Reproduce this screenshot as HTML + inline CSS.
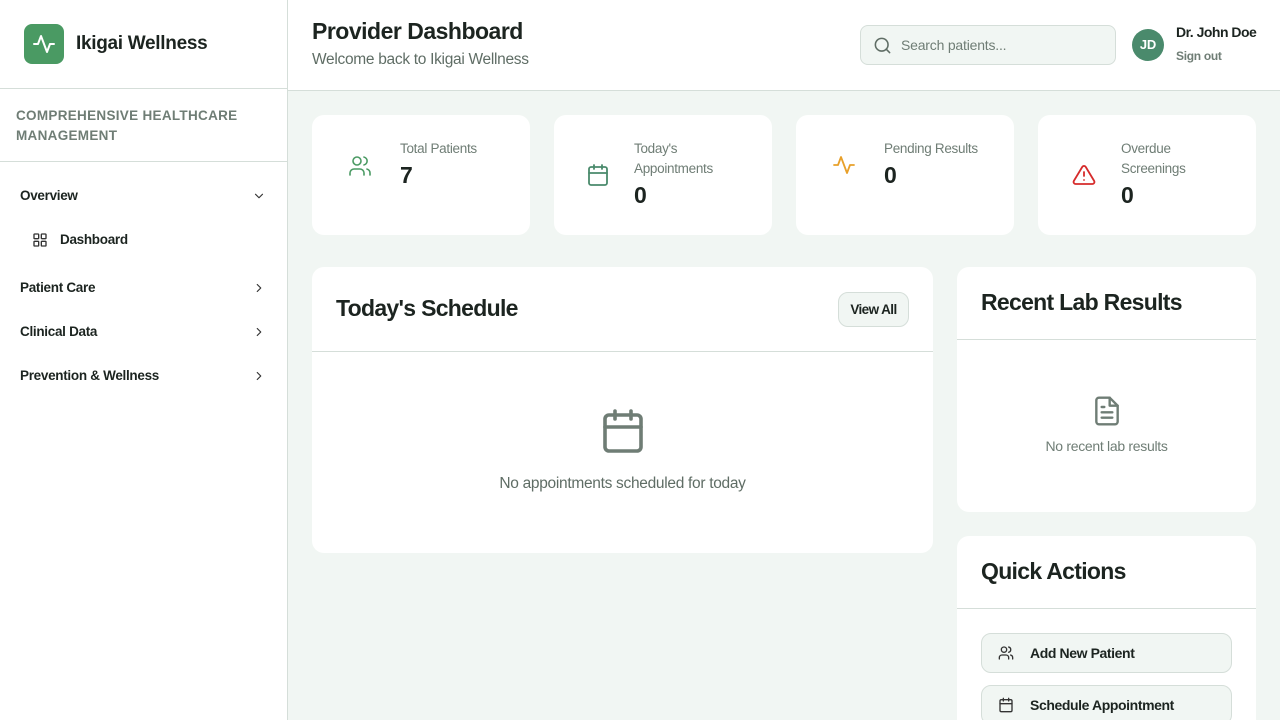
<!DOCTYPE html>
<html><head><meta charset="utf-8"><style>
*{box-sizing:border-box;margin:0;padding:0}
html,body{width:1280px;height:720px;overflow:hidden}
body{font-family:"Liberation Sans",sans-serif;background:#f1f6f3;position:relative;color:#1c2420;letter-spacing:-.2px}
.sb{position:absolute;left:0;top:0;width:288px;height:720px;background:#fff;border-right:1px solid #d5ded9}
.logo{position:absolute;left:24px;top:24px;width:40px;height:40px;border-radius:8px;background:#4a9a63}
.brand{position:absolute;left:76px;top:33px;font-size:19px;font-weight:bold;letter-spacing:-.3px}
.hr{position:absolute;left:0;width:287px;border-top:1px solid #d5ded9}
.tag{position:absolute;left:16px;top:106px;font-size:13.5px;font-weight:bold;color:#6f7d75;letter-spacing:.3px;line-height:20px;width:240px}
.nav{position:absolute;left:20px;font-size:13.5px;font-weight:bold;letter-spacing:-.3px}
.chev{position:absolute;left:252px}
.hd{position:absolute;left:288px;top:0;width:992px;height:91px;background:#fff;border-bottom:1px solid #d5ded9}
.card{position:absolute;background:#fff;border-radius:12px}
.lbl{position:absolute;font-size:13.5px;color:#6f7d75;line-height:20px;letter-spacing:-.3px}
.num{position:absolute;font-size:23px;font-weight:bold}
.h2{position:absolute;font-size:23px;font-weight:bold;letter-spacing:-.7px}
.line{position:absolute;left:0;right:0;border-top:1px solid #d5ded9}
.btn{position:absolute;left:24px;width:251px;height:40px;border:1px solid #d5ded9;border-radius:10px;background:#f1f6f3;font-size:14px;font-weight:bold;letter-spacing:-.4px}
svg{position:absolute;fill:none;stroke-linecap:round;stroke-linejoin:round}
</style></head><body>
<div class="sb">
<div class="logo"><svg style="left:8px;top:8px" width="24" height="24" viewBox="0 0 24 24" stroke="#fff" stroke-width="2"><path d="M22 12h-4l-3 8L9 4l-3 8H2"/></svg></div>
<div class="brand">Ikigai Wellness</div>
<div class="hr" style="top:88px"></div>
<div class="tag">COMPREHENSIVE HEALTHCARE<br>MANAGEMENT</div>
<div class="hr" style="top:161px"></div>
<div class="nav" style="top:188px">Overview</div>
<svg class="chev" style="top:189px" width="14" height="14" viewBox="0 0 24 24" stroke="#333" stroke-width="2"><path d="M6 9l6 6 6-6"/></svg>
<svg style="left:32px;top:232px" width="16" height="16" viewBox="0 0 24 24" stroke="#333" stroke-width="2"><rect x="3" y="3" width="7" height="7" rx="1"/><rect x="14" y="3" width="7" height="7" rx="1"/><rect x="14" y="14" width="7" height="7" rx="1"/><rect x="3" y="14" width="7" height="7" rx="1"/></svg>
<div class="nav" style="top:232px;left:60px">Dashboard</div>
<div class="nav" style="top:280px">Patient Care</div>
<div class="nav" style="top:324px">Clinical Data</div>
<div class="nav" style="top:368px">Prevention &amp; Wellness</div>
<svg class="chev" style="top:281px" width="14" height="14" viewBox="0 0 24 24" stroke="#333" stroke-width="2"><path d="M9 6l6 6-6 6"/></svg>
<svg class="chev" style="top:325px" width="14" height="14" viewBox="0 0 24 24" stroke="#333" stroke-width="2"><path d="M9 6l6 6-6 6"/></svg>
<svg class="chev" style="top:369px" width="14" height="14" viewBox="0 0 24 24" stroke="#333" stroke-width="2"><path d="M9 6l6 6-6 6"/></svg>
</div>
<div class="hd">
<div style="position:absolute;left:24px;top:18px;font-size:23px;font-weight:bold;letter-spacing:-.5px">Provider Dashboard</div>
<div style="position:absolute;left:24px;top:51px;font-size:15.5px;color:#5f6d65;letter-spacing:-.3px">Welcome back to Ikigai Wellness</div>
<div style="position:absolute;left:572px;top:25px;width:256px;height:40px;border:1px solid #d5ded9;border-radius:8px;background:#f1f6f3">
<svg style="left:12px;top:10px" width="19" height="19" viewBox="0 0 24 24" stroke="#5f6d65" stroke-width="2"><circle cx="11" cy="11" r="8"/><path d="M21 21l-4.3-4.3"/></svg>
<div style="position:absolute;left:40px;top:11px;font-size:14px;color:#6f7d75">Search patients...</div></div>
<div style="position:absolute;left:844px;top:29px;width:32px;height:32px;border-radius:50%;background:#4a8a6c;color:#fff;font-size:13px;font-weight:bold;text-align:center;line-height:32px">JD</div>
<div style="position:absolute;left:888px;top:24px;font-size:14px;font-weight:bold;letter-spacing:-.5px">Dr. John Doe</div>
<div style="position:absolute;left:888px;top:49px;font-size:12px;font-weight:bold;color:#6f7d75;letter-spacing:-.3px">Sign out</div>
</div>

<div class="card" style="left:312px;top:115px;width:218px;height:120px">
<svg style="left:36px;top:39px" width="24" height="24" viewBox="0 0 24 24" stroke="#4a9a63" stroke-width="1.6"><path d="M16 21v-2a4 4 0 0 0-4-4H6a4 4 0 0 0-4 4v2"/><circle cx="9" cy="7" r="4"/><path d="M22 21v-2a4 4 0 0 0-3-3.9M16 3.1a4 4 0 0 1 0 7.8"/></svg>
<div class="lbl" style="left:88px;top:24px">Total Patients</div><div class="num" style="left:88px;top:47px">7</div></div>
<div class="card" style="left:554px;top:115px;width:218px;height:120px">
<svg style="left:32px;top:48px" width="24" height="24" viewBox="0 0 24 24" stroke="#4a8a6c" stroke-width="1.8"><rect x="3" y="4" width="18" height="18" rx="2"/><path d="M16 2v4M8 2v4M3 10h18"/></svg>
<div class="lbl" style="left:80px;top:24px">Today's<br>Appointments</div><div class="num" style="left:80px;top:67px">0</div></div>
<div class="card" style="left:796px;top:115px;width:218px;height:120px">
<svg style="left:36px;top:38px" width="24" height="24" viewBox="0 0 24 24" stroke="#e8a02a" stroke-width="1.8"><path d="M22 12h-4l-3 8L9 4l-3 8H2"/></svg>
<div class="lbl" style="left:88px;top:24px">Pending Results</div><div class="num" style="left:88px;top:47px">0</div></div>
<div class="card" style="left:1038px;top:115px;width:218px;height:120px">
<svg style="left:34px;top:48px" width="24" height="24" viewBox="0 0 24 24" stroke="#d62b2b" stroke-width="1.8"><path d="M10.3 3.9L1.8 18a2 2 0 0 0 1.7 3h17a2 2 0 0 0 1.7-3L13.7 3.9a2 2 0 0 0-3.4 0zM12 9v4M12 17h.01"/></svg>
<div class="lbl" style="left:83px;top:24px">Overdue<br>Screenings</div><div class="num" style="left:83px;top:67px">0</div></div>

<div class="card" style="left:312px;top:267px;width:621px;height:286px">
<div class="h2" style="left:24px;top:28px">Today's Schedule</div>
<div style="position:absolute;left:526px;top:25px;width:71px;height:35px;border:1px solid #d5ded9;border-radius:10px;background:#f1f6f3;font-size:13.5px;font-weight:bold;text-align:center;line-height:33px;letter-spacing:-.6px">View All</div>
<div class="line" style="top:84px"></div>
<svg style="left:287px;top:140px" width="48" height="48" viewBox="0 0 24 24" stroke="#6f7d75" stroke-width="1.8"><rect x="3" y="4" width="18" height="18" rx="2"/><path d="M16 2v4M8 2v4M3 10h18"/></svg>
<div style="position:absolute;left:0;right:0;top:208px;text-align:center;font-size:15.5px;color:#5f6d65;letter-spacing:-.3px">No appointments scheduled for today</div>
</div>

<div class="card" style="left:957px;top:267px;width:299px;height:245px">
<div class="h2" style="left:24px;top:22px">Recent Lab Results</div>
<div class="line" style="top:72px"></div>
<svg style="left:134px;top:128px" width="32" height="32" viewBox="0 0 24 24" stroke="#6f7d75" stroke-width="1.8"><path d="M14 2H6a2 2 0 0 0-2 2v16a2 2 0 0 0 2 2h12a2 2 0 0 0 2-2V8z"/><path d="M14 2v6h6M16 13H8M16 17H8M10 9H8"/></svg>
<div style="position:absolute;left:0;right:0;top:171px;text-align:center;font-size:14px;color:#6f7d75;letter-spacing:-.3px">No recent lab results</div>
</div>

<div class="card" style="left:957px;top:536px;width:299px;height:200px">
<div class="h2" style="left:24px;top:22px">Quick Actions</div>
<div class="line" style="top:72px"></div>
<div class="btn" style="top:97px"><svg style="left:16px;top:11px" width="16" height="16" viewBox="0 0 24 24" stroke="#333" stroke-width="2"><path d="M16 21v-2a4 4 0 0 0-4-4H6a4 4 0 0 0-4 4v2"/><circle cx="9" cy="7" r="4"/><path d="M22 21v-2a4 4 0 0 0-3-3.9M16 3.1a4 4 0 0 1 0 7.8"/></svg><span style="position:absolute;left:48px;top:11px">Add New Patient</span></div>
<div class="btn" style="top:149px"><svg style="left:16px;top:11px" width="16" height="16" viewBox="0 0 24 24" stroke="#333" stroke-width="2"><rect x="3" y="4" width="18" height="18" rx="2"/><path d="M16 2v4M8 2v4M3 10h18"/></svg><span style="position:absolute;left:48px;top:11px">Schedule Appointment</span></div>
</div>
</body></html>
